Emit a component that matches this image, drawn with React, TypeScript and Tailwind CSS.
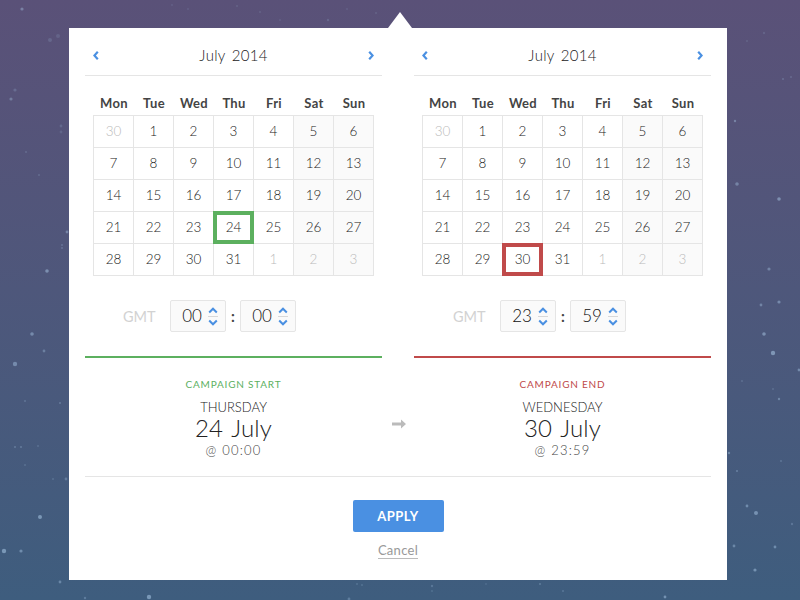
const font = "font-['Lato','Open_Sans',sans-serif]";

const stars: [number, number, number, number][] = [
  [22, 9, 1.6, 0.4], [50, 40, 2, 0.18], [58, 36, 2, 0.15], [15, 90, 1.6, 0.22], [11, 99, 1.6, 0.35], [67, 232, 1.4, 0.4],
  [47, 271, 1.8, 0.5], [62, 245, 1, 0.25], [62, 248, 1, 0.25], [26, 152, 1, 0.2], [39, 175, 1, 0.2], [61, 126, 1.4, 0.18], [61, 132, 1.4, 0.15],
  [32, 334, 1.8, 0.45], [44, 351, 1.4, 0.35], [15, 364, 2.2, 0.45], [25, 401, 1, 0.25], [60, 403, 1, 0.3], [38, 446, 1, 0.2],
  [15, 447, 1, 0.3], [21, 447, 1, 0.3], [25, 465, 1, 0.2], [66, 479, 1.4, 0.3], [40, 517, 2, 0.55], [4, 551, 2.2, 0.55],
  [21, 551, 1.6, 0.45], [60, 582, 1.4, 0.4], [53, 479, 1, 0.2],
  [735, 121, 1.2, 0.4], [737, 184, 1.8, 0.4], [779, 199, 1.8, 0.5], [769, 269, 1.6, 0.4], [764, 33, 1.2, 0.15], [747, 41, 1, 0.15],
  [783, 79, 1, 0.25], [791, 77, 1, 0.2],
  [761, 305, 1.4, 0.4], [779, 302, 1.6, 0.45], [764, 334, 1.8, 0.5], [773, 353, 2.2, 0.55], [799, 370, 1.4, 0.45], [779, 399, 1.2, 0.4],
  [773, 389, 1, 0.2], [742, 381, 1, 0.2], [729, 453, 1.2, 0.4], [737, 471, 1, 0.35], [747, 506, 1.4, 0.45], [756, 513, 2, 0.5],
  [792, 524, 1.2, 0.25], [734, 546, 1.4, 0.4], [775, 547, 1.4, 0.45], [755, 570, 1.6, 0.5], [781, 461, 1, 0.25],
  [149, 597, 2.2, 0.55], [85, 598, 1.2, 0.3], [357, 584, 1, 0.2], [362, 585, 1, 0.2], [349, 599, 1.4, 0.3],
  [432, 586, 1.2, 0.25], [432, 591, 1, 0.18], [540, 584, 1, 0.3], [563, 591, 1, 0.25], [665, 597, 1.4, 0.5], [486, 584, 1, 0.15],
  [328, 20, 1.2, 0.18], [260, 12, 1, 0.15], [237, 6, 1, 0.15], [172, 5, 1, 0.12], [376, 13, 1, 0.15], [188, 9, 1, 0.12], [347, 9, 1, 0.12], [280, 20, 1, 0.12],
];

const rows = [
  [30, 1, 2, 3, 4, 5, 6],
  [7, 8, 9, 10, 11, 12, 13],
  [14, 15, 16, 17, 18, 19, 20],
  [21, 22, 23, 24, 25, 26, 27],
  [28, 29, 30, 31, 1, 2, 3],
];
const days = ["Mon", "Tue", "Wed", "Thu", "Fri", "Sat", "Sun"];

function Chevron({ dir }: { dir: "l" | "r" }) {
  return (
    <svg width="6" height="9" viewBox="0 0 6 9" fill="none" stroke="#4a90e2" strokeWidth="2.2">
      <path d={dir === "l" ? "M4.8 0.8 L1.4 4.5 L4.8 8.2" : "M1.2 0.8 L4.6 4.5 L1.2 8.2"} />
    </svg>
  );
}

function Stepper() {
  return (
    <div className="flex flex-col items-center w-[10px]">
      <svg width="10" height="7" viewBox="0 0 10 7" fill="none" stroke="#4a90e2" strokeWidth="2">
        <path d="M1.2 5.5 L5 1.7 L8.8 5.5" />
      </svg>
      <div className="w-[10px] h-px bg-[#d8d8d8] my-[2px]" />
      <svg width="10" height="7" viewBox="0 0 10 7" fill="none" stroke="#4a90e2" strokeWidth="2">
        <path d="M1.2 1.5 L5 5.3 L8.8 1.5" />
      </svg>
    </div>
  );
}

function TimeBox({ v }: { v: string }) {
  return (
    <div className="w-[56px] h-[32px] flex items-center justify-end gap-[6px] pr-[7px] rounded-[2px] border border-[#e5e5e5] bg-[#fafafa]">
      <span className="w-[20px] text-center text-[17px] font-light text-[#111]">{v}</span>
      <Stepper />
    </div>
  );
}

function Calendar({ selected, ring, hh, mm, line, timePad }: { selected: number; ring: string; hh: string; mm: string; line: string; timePad: string }) {
  return (
    <div className="w-[297px] flex flex-col">
      <div className="h-[48px] px-[8px] pt-[8px] flex items-center justify-between border-b border-[#e5e5e5]">
        <Chevron dir="l" />
        <span className="text-[15px] font-light text-[#222] tracking-[0.3px] [word-spacing:2px]">July 2014</span>
        <Chevron dir="r" />
      </div>
      <div className="mt-[17px] ml-[8px] w-[281px] grid grid-cols-7 pl-px">
        {days.map((d) => (
          <div key={d} className="h-[22px] w-[40px] pt-px text-center text-[13px] font-bold text-[#444] tracking-[0.3px]">{d}</div>
        ))}
      </div>
      <div className="ml-[8px] w-[281px] grid grid-cols-[repeat(7,40px)] border-l border-t border-[#e5e5e5]">
        {rows.flatMap((r, i) =>
          r.map((n, j) => {
            const outside = (i === 0 && j === 0) || (i === 4 && j > 3);
            const isSel = !outside && n === selected;
            return (
              <div
                key={`${i}-${j}`}
                className={`relative h-[32px] flex items-center justify-center text-[13.5px] font-light border-r border-b border-[#e5e5e5] ${j > 4 ? "bg-[#fafafa]" : "bg-white"} ${outside ? "text-[#bbb]" : "text-[#222]"}`}
              >
                {n}
                {isSel && <div className={`absolute left-[-1px] top-[-1px] w-[41px] h-[33px] border-[4px] ${ring}`} />}
              </div>
            );
          })
        )}
      </div>
      <div className={`mt-[23px] flex items-center h-[34px] ${timePad}`}>
        <span className="w-[47px] pt-px text-[14.5px] text-[#d2d2d2]">GMT</span>
        <TimeBox v={hh} />
        <span className="w-[14px] text-center text-[15px] font-bold text-[#444]">:</span>
        <TimeBox v={mm} />
      </div>
      <div className={`mt-[23px] h-[2px] ${line}`} />
    </div>
  );
}

function Summary({ label, color, day, date, time }: { label: string; color: string; day: string; date: string; time: string }) {
  return (
    <div className="w-[297px] flex flex-col items-center">
      <div className={`-mt-px text-[10px] leading-[14px] tracking-[0.8px] ${color}`}>{label}</div>
      <div className="mt-[8px] text-[13px] font-light leading-[16px] text-[#222]">{day}</div>
      <div className="text-[24px] font-light leading-[26px] text-[#222] tracking-[0.2px] [word-spacing:2px]">{date}</div>
      <div className="text-[13px] font-light leading-[18px] text-[#444] tracking-[1.2px]">{time}</div>
    </div>
  );
}

export default function App() {
  return (
    <div className={`${font} relative w-[800px] h-[600px] overflow-hidden bg-gradient-to-b from-[#5a5178] to-[#3e5d7e] flex flex-col items-start`}>
      <svg className="absolute inset-0 blur-[0.7px]" width="800" height="600">
        {stars.map(([x, y, r, o], i) => (
          <circle key={i} cx={x} cy={y} r={r} fill="#a9c8e6" opacity={o} />
        ))}
      </svg>
      <div className="relative mt-[28px] ml-[69px] w-[658px] h-[552px] bg-white px-[16px] flex flex-col">
        <div className="absolute left-[319px] top-[-16px] w-0 h-0 border-x-[12px] border-x-transparent border-b-[16px] border-b-white" />
        <div className="flex gap-[32px]">
          <Calendar selected={24} ring="border-[#5cb05f]" hh="00" mm="00" line="bg-[#5cb05f]" timePad="pl-[38px]" />
          <Calendar selected={30} ring="border-[#c04a4a]" hh="23" mm="59" line="bg-[#c04a4a]" timePad="pl-[39px]" />
        </div>
        <div className="relative mt-[20px] flex justify-between border-b border-[#e5e5e5] h-[99px]">
          <Summary label="CAMPAIGN START" color="text-[#5cb05f]" day="THURSDAY" date="24 July" time="@ 00:00" />
          <svg className="absolute left-[307px] top-[41px]" width="14" height="10" viewBox="0 0 14 10" fill="#bbb">
            <path d="M0 3.5 H9 V0.5 L14 5 L9 9.5 V6.5 H0 Z" />
          </svg>
          <Summary label="CAMPAIGN END" color="text-[#c04a4a]" day="WEDNESDAY" date="30 July" time="@ 23:59" />
        </div>
        <div className="mt-[23px] flex flex-col items-center">
          <button className="w-[91px] h-[32px] pt-px rounded-[2px] bg-[#4a90e2] text-white text-[13px] font-bold tracking-[0.5px]">APPLY</button>
          <a className="mt-[10px] text-[13px] leading-[16px] text-[#999] tracking-[0.3px] border-b border-[#bbb]">Cancel</a>
        </div>
      </div>
    </div>
  );
}
